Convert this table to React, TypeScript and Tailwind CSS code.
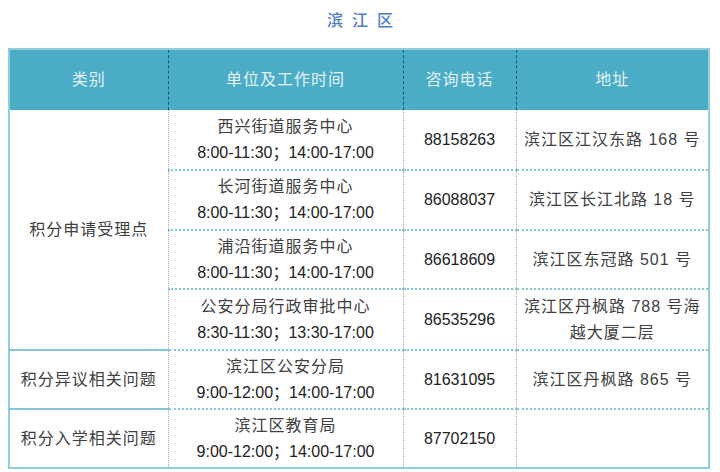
const rows = [
  { unit: '西兴街道服务中心', time: '8:00-11:30；14:00-17:00', phone: '88158263', addr: ['滨江区江汉东路 168 号'], h: 'h-[60px]' },
  { unit: '长河街道服务中心', time: '8:00-11:30；14:00-17:00', phone: '86088037', addr: ['滨江区长江北路 18 号'], h: 'h-[60px]' },
  { unit: '浦沿街道服务中心', time: '8:00-11:30；14:00-17:00', phone: '86618609', addr: ['滨江区东冠路 501 号'], h: 'h-[59px]' },
  { unit: '公安分局行政审批中心', time: '8:30-11:30；13:30-17:00', phone: '86535296', addr: ['滨江区丹枫路 788 号海', '越大厦二层'], h: 'h-[61px]' },
];

const font = { fontFamily: '"Liberation Sans", "Noto Sans CJK SC", sans-serif' };

function Unit({ name, time }: { name: string; time: string }) {
  return (
    <div className="flex flex-col items-center leading-[26px]">
      <span className="tracking-[1px] text-[#404040]">{name}</span>
      <span className="text-[#222]">{time}</span>
    </div>
  );
}

export default function App() {
  const body = 'border-t-2 border-t-[#86c6d8] border-l border-l-[#a8a8a8] border-dotted text-center align-middle';
  return (
    <div className="w-[720px] h-[472px] bg-white text-[16px]" style={font}>
      <div className="h-[48px] pt-[9px] text-center">
        <span className="pl-[9px] text-[16px] font-medium tracking-[9px] text-[#4f7bcb]">滨江区</span>
      </div>
      <table className="ml-[8px] w-[702px] border-collapse border-2 border-[#92cddc] table-fixed">
        <colgroup>
          <col className="w-[159px]" />
          <col className="w-[235px]" />
          <col className="w-[113px]" />
          <col />
        </colgroup>
        <thead>
          <tr className="h-[61px] bg-[#4bacc6] text-[#e4f2f6] tracking-[1px]">
            <th className="font-normal">类别</th>
            <th className="font-normal border-l border-dashed border-[#1f5568]">单位及工作时间</th>
            <th className="font-normal border-l border-dashed border-[#1f5568]">咨询电话</th>
            <th className="font-normal border-l border-dashed border-[#1f5568]">地址</th>
          </tr>
        </thead>
        <tbody>
          {rows.map((r, i) => (
            <tr key={r.phone} className={r.h}>
              {i === 0 && (
                <td rowSpan={4} className="text-center align-middle tracking-[1px] text-[#404040]">
                  积分申请受理点
                </td>
              )}
              <td className={i === 0 ? 'text-center align-middle border-l border-dotted border-l-[#a8a8a8]' : body}>
                <Unit name={r.unit} time={r.time} />
              </td>
              <td className={(i === 0 ? 'border-l border-dotted border-l-[#a8a8a8] text-center' : body) + ' text-[#222]'}>
                {r.phone}
              </td>
              <td className={(i === 0 ? 'border-l border-dotted border-l-[#a8a8a8] text-center' : body) + ' text-[#404040] leading-[26px]'}>
                {r.addr.map((a) => (
                  <div key={a} className="tracking-[1px]">{a}</div>
                ))}
              </td>
            </tr>
          ))}
          <tr className="h-[59px]">
            <td className="border-t-2 border-t-[#86c6d8] text-center tracking-[1px] text-[#404040]">积分异议相关问题</td>
            <td className={body}>
              <Unit name="滨江区公安分局" time="9:00-12:00；14:00-17:00" />
            </td>
            <td className={body + ' text-[#222]'}>81631095</td>
            <td className={body + ' text-[#404040] tracking-[1px]'}>滨江区丹枫路 865 号</td>
          </tr>
          <tr className="h-[59px]">
            <td className="border-t-2 border-t-[#86c6d8] text-center tracking-[1px] text-[#404040]">积分入学相关问题</td>
            <td className={body}>
              <Unit name="滨江区教育局" time="9:00-12:00；14:00-17:00" />
            </td>
            <td className={body + ' text-[#222]'}>87702150</td>
            <td className={body}></td>
          </tr>
        </tbody>
      </table>
    </div>
  );
}
